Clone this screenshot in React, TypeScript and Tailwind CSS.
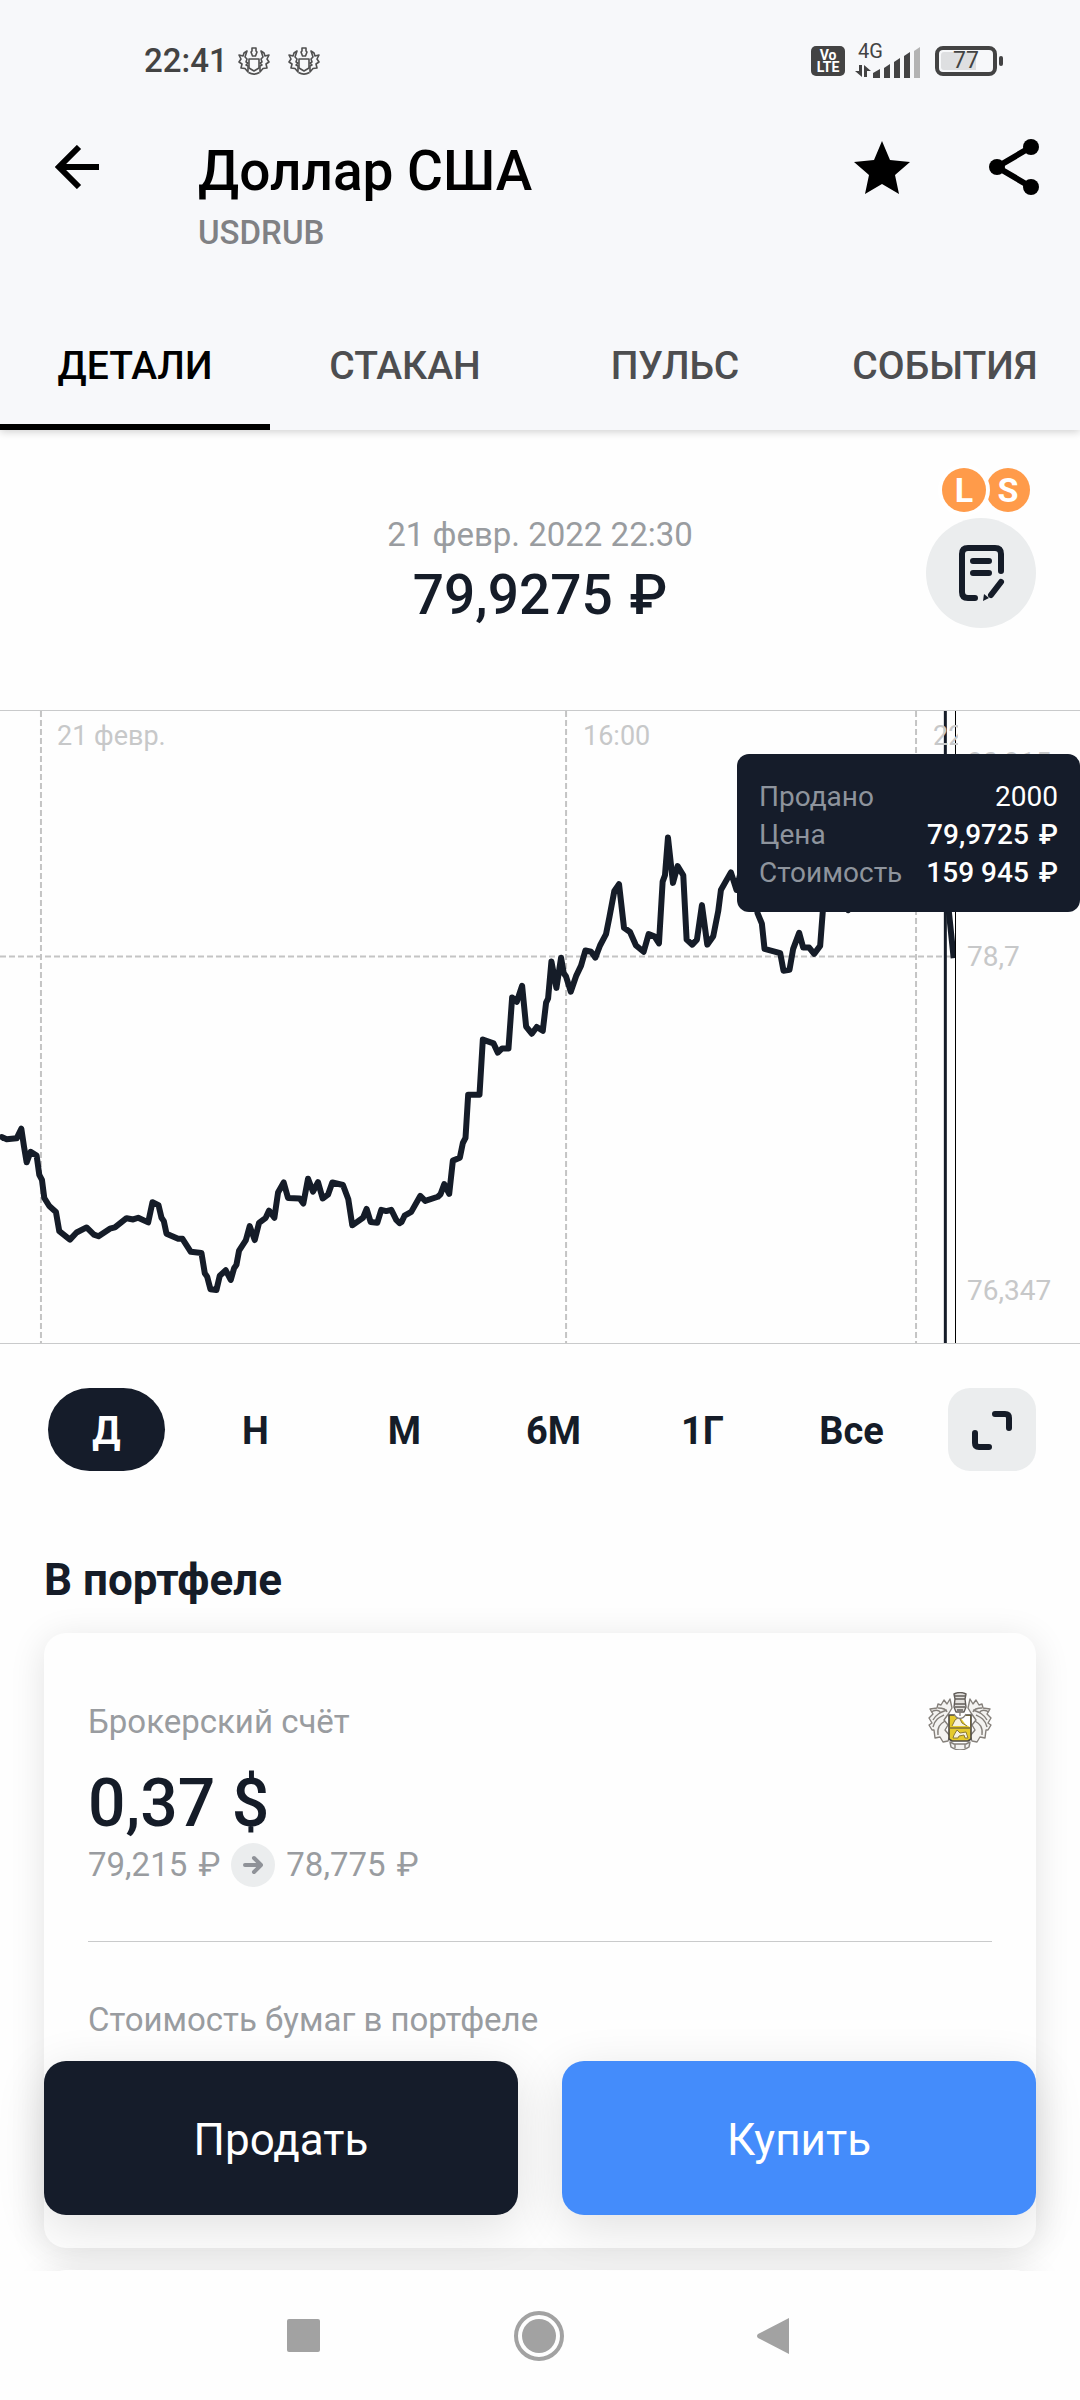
import type { ReactNode } from "react";

const TABS = ["ДЕТАЛИ", "СТАКАН", "ПУЛЬС", "СОБЫТИЯ"];
const RANGES = ["Д", "Н", "М", "6М", "1Г", "Все"];

// viewBox units of the plot: 3 per pixel across, stretched to the panel's height
const PRICE_LINE =
  "0,1043 5,1038 20,1043 50,1041 64,1018 72,1060 80,1098 92,1073 110,1082 118,1128 126,1140 133,1183 148,1202 168,1216 " +
  "178,1262 210,1282 230,1265 260,1253 282,1270 296,1274 330,1256 345,1253 380,1231 400,1234 415,1230 445,1241 458,1193 " +
  "476,1200 485,1230 492,1238 500,1268 535,1280 548,1280 573,1311 605,1314 615,1362 622,1370 632,1400 650,1402 660,1368 " +
  "678,1355 693,1378 703,1350 710,1342 718,1308 738,1284 750,1250 765,1283 778,1242 798,1230 808,1213 824,1230 835,1170 " +
  "852,1146 865,1183 900,1184 911,1196 925,1137 940,1168 955,1145 969,1184 985,1175 998,1146 1030,1152 1046,1186 " +
  "1058,1248 1090,1230 1101,1209 1113,1240 1133,1242 1145,1211 1160,1214 1175,1211 1190,1235 1200,1243 1206,1240 " +
  "1215,1225 1235,1216 1262,1178 1277,1190 1315,1180 1323,1174 1334,1150 1349,1173 1360,1094 1381,1087 1390,1052 " +
  "1398,1040 1406,937 1440,937 1450,806 1482,815 1495,837 1508,827 1527,827 1538,706 1552,716 1568,678 1580,775 " +
  "1597,792 1612,776 1630,785 1640,718 1646,708 1656,620 1671,683 1685,611 1693,648 1700,656 1714,692 1730,655 " +
  "1745,630 1758,594 1775,597 1788,611 1802,582 1820,555 1830,515 1845,452 1859,436 1874,540 1892,550 1910,582 " +
  "1933,597 1948,555 1965,560 1979,577 1990,430 1997,415 2006,325 2021,433 2035,393 2052,415 2062,568 2079,580 " +
  "2093,568 2108,486 2124,580 2142,560 2157,500 2165,450 2195,408 2212,450 2232,380 2262,420 2275,505 2288,530 " +
  "2296,590 2343,600 2353,642 2371,640 2382,590 2400,552 2412,587 2430,587 2445,602 2463,583 2472,490 2500,420 " +
  "2547,498 2600,430 2700,380 2800,400 2850,505 2864,612";

function TinkoffOutline() {
  return (
    <svg viewBox="0 0 32 28" className="h-7 w-8" fill="none" stroke="#505050" strokeWidth="1.6" strokeLinejoin="round" aria-hidden="true">
      <path d="M14 1h4v3l1 1-1.500 4h-3L13 5l1-1zM11 12h10v9l-5 3-5-3z" />
      <path d="M9 4 6 6 5 9 1 8l2 4-2 3 3 2-1 4 4 .5L10 25v-6l-2-1 2-2-2-1 1-3-2-2z" />
      <path d="M23 4l3 2 1 3 4-1-2 4 2 3-3 2 1 4-4 .5L22 25v-6l2-1-2-2 2-1-1-3 2-2z" />
      <path d="M10.500 25.500c3.500 2 7.500 2 11 0" />
    </svg>
  );
}

function BrokerCrest() {
  return (
    <svg viewBox="0 0 64 58" className="h-[58px] w-16" fill="none" stroke="#85807b" strokeWidth="1.4" strokeLinejoin="round" aria-hidden="true">
      <path d="M22 7 19 12 16 8 13 13 10 12 9 16 2 17 5 22 1 26 4 31 1 33 4 38 6 38 7 46 12 45 15 50 20 49 22 44 17 38 20 33 16 28 21 21 24 16z" fill="#f4f3f1" />
      <path d="M42 7l3 5 3-4 3 5 3-1 1 4 7 1-3 5 4 4-3 5 3 2-3 5-2 0-1 8-5-1-3 5-5-1-2-5 5-6-3-5 4-5-5-7-3-5z" fill="#f4f3f1" />
      <path d="M3 20c5-3 8-2 10 1M10 16c5 0 8 1 9 4M5 28c4-7 9-8 14-10M5 35c2-8 7-10 11-12M10 43c-1-8 2-11 7-14" />
      <path d="M61 20c-5-3-8-2-10 1M54 16c-5 0-8 1-9 4M59 28c-4-7-9-8-14-10M59 35c-2-8-7-10-11-12M54 43c1-8-2-11-7-14" />
      <path d="M26 2c4-2 8-2 12 0l-1 5 1 8-2 5h-8l-2-5 1-8z" fill="#e4e2df" stroke="#625d59" />
      <path d="M27 4h10M27 7h10M26 12h12M27 15h10M29 18h6" stroke="#625d59" />
      <path d="M21 23h22v24l-3 2H24l-3-2z" fill="#e5ca2c" stroke="#4c4844" strokeWidth="1.6" />
      <path d="M32 24h10v11l-4-2-6-8z" fill="#fff" stroke="none" />
      <path d="M21 36h22" stroke="#77683a" />
      <path d="M24 34l3-6 4-3 3 6 5 3M25 46l1-3 3-5 3 3 6-1 2 6h-3l-1-3-5 1-1 2z" fill="#f6f1de" stroke="#8b7934" strokeWidth="1" />
      <path d="M26 22c3 6 9 6 12 0M32 19v5" fill="#fff" />
      <path d="M22 50l4 2h12l4-2-1 5c-6 4-12 4-18 0zM27 52v4M37 52v4" fill="#f4f3f2" />
    </svg>
  );
}

function Ruble() {
  return <span className="ml-[3px]">₽</span>;
}

function StatusBar() {
  return (
    <div className="flex h-[121px] items-center justify-between pr-[77px] pl-36 text-[#434343]">
      <div className="flex items-center">
        <span className="text-[33px] font-medium">22:41</span>
        <span className="ml-[10px] flex gap-[18px]">
          <TinkoffOutline />
          <TinkoffOutline />
        </span>
      </div>
      <div className="flex items-center">
        <div className="flex h-[30px] w-[34px] flex-col items-center justify-center rounded-[5px] bg-[#434343] text-[14px] leading-3 font-bold text-white">
          <span>Vo</span>
          <span>LTE</span>
        </div>
        <div className="relative ml-[10px] h-[35px] w-[66px]">
          <span className="absolute top-0 left-[3px] text-[20px] leading-[16px]">4G</span>
          <svg viewBox="0 0 66 35" className="h-full w-full" fill="#434343" aria-hidden="true">
            <path d="M4 22h3v12L0 28h4zM9 22l7 6h-4v6H9z" />
            <path d="M18 30l7-4v9h-7zM29 25l6-4v14h-6zM39 19l6-4v20h-6zM49 13l6-4v26h-6z" />
            <path d="M59 8l6-4v31h-6z" fill="#b3b3b3" />
          </svg>
        </div>
        <div className="ml-[14px] flex items-center gap-[2px]">
          <div className="h-[30px] w-[62px] rounded-[8px] border-4 border-[#434343] p-[2px]">
            <div className="flex h-full w-full items-center justify-center rounded-[3px] bg-linear-to-r from-[#dedfe1] from-70% to-transparent to-70% text-[23px] leading-4">77</div>
          </div>
          <div className="h-[10px] w-[4px] rounded-[2px] bg-[#434343]" />
        </div>
      </div>
    </div>
  );
}

function Header() {
  return (
    <header className="relative z-10 shrink-0 bg-[#f7f8fa] shadow-[0_2px_8px_rgba(0,0,0,0.18)]">
      <StatusBar />
      <div className="flex h-[187px] items-start pr-[41px] pl-[55px]">
        <button aria-label="Назад" className="mt-6">
          <svg viewBox="0 0 44 44" className="size-11" fill="none" stroke="#000" strokeWidth="6" aria-hidden="true">
            <path d="M44 22H5M24 2 4 22l20 20" />
          </svg>
        </button>
        <div className="ml-[99px] flex-1 pt-[18px]">
          <h1 className="text-[55px] leading-[64px] font-medium text-black">Доллар США</h1>
          <p className="mt-2 text-[33px] leading-[44px] font-medium text-[#808184]">USDRUB</p>
        </div>
        <button aria-label="В избранном" className="mt-5">
          <svg viewBox="0 0 56 53" className="h-[53px] w-14" aria-hidden="true">
            <path d="M28 0l8 19 20 2-15 13 4 19-17-10-17 10 4-19L0 21l20-2z" />
          </svg>
        </button>
        <button aria-label="Поделиться" className="mt-[18px] ml-[79px]">
          <svg viewBox="0 0 50 56" className="h-14 w-[50px]" aria-hidden="true">
            <path d="M42 8 8 28l34 20" fill="none" stroke="#000" strokeWidth="6" />
            <circle cx="42" cy="8" r="8" />
            <circle cx="8" cy="28" r="8" />
            <circle cx="42" cy="48" r="8" />
          </svg>
        </button>
      </div>
      <nav className="grid grid-cols-4">
        {TABS.map((tab, i) => (
          <button
            key={tab}
            className={
              i === 0
                ? "h-[122px] border-b-6 border-black text-[39px] font-medium text-black"
                : "h-[122px] border-b-6 border-transparent text-[39px] font-medium text-[#4d4e50]"
            }
          >
            {tab}
          </button>
        ))}
      </nav>
    </header>
  );
}

function Quote() {
  return (
    <section className="grid h-[280px] grid-cols-[1fr_auto_1fr] px-11">
      <div />
      <div className="pt-[82px] text-center">
        <p className="text-[33px] leading-[46px] text-[#999ca0]">21 февр. 2022 22:30</p>
        <p className="mt-[5px] text-[55px] leading-[64px] font-medium text-[#151c28]">
          79,9275 <Ruble />
        </p>
      </div>
      <div className="flex flex-col items-end pt-[38px]">
        <div className="mr-[6px] flex text-[34px] font-bold text-white">
          <span className="z-10 flex size-11 items-center justify-center rounded-full bg-[#ff9b4a] ring-4 ring-white">L</span>
          <span className="flex size-11 items-center justify-center rounded-full bg-[#ff9b4a]">S</span>
        </div>
        <button aria-label="Заметки" className="mt-[6px] flex size-[110px] items-center justify-center rounded-full bg-[#ebedee]">
          <svg viewBox="0 0 48 58" className="h-[58px] w-12" fill="none" stroke="#151c28" strokeWidth="6" strokeLinecap="round" aria-hidden="true">
            <path d="M18 54h-7q-6 0-6-6V10q0-6 6-6h27q6 0 6 6v17M16 17h16M16 29h16M44 38 34 51" />
            <path d="M27 50l5 4-6 3z" fill="#151c28" stroke="none" />
          </svg>
        </button>
      </div>
    </section>
  );
}

function DealTooltip() {
  return (
    <dl className="absolute top-[43px] right-0 flex w-[343px] flex-col rounded-xl bg-[#151c2a] px-[22px] pt-6 pb-5 text-[28px] leading-[38px] text-white">
      <div className="flex justify-between">
        <dt className="text-[#8e949d]">Продано</dt>
        <dd>2000</dd>
      </div>
      <div className="flex justify-between">
        <dt className="text-[#8e949d]">Цена</dt>
        <dd className="font-medium">
          79,9725 <Ruble />
        </dd>
      </div>
      <div className="flex justify-between">
        <dt className="text-[#8e949d]">Стоимость</dt>
        <dd className="font-medium">
          159 945 <Ruble />
        </dd>
      </div>
    </dl>
  );
}

function PriceChart() {
  return (
    <section className="relative flex h-[634px] border-y border-[#c9cacb] text-[27px] leading-8 text-[#c7c8c9]">
      <div className="relative min-w-0 flex-1 border-r border-black">
        <svg viewBox="0 24 2868 1504" preserveAspectRatio="none" className="h-full w-full" fill="none" aria-hidden="true">
          <g stroke="#c4c4c4" strokeWidth="2" strokeDasharray="6 3">
            <path d="M123 24v1504M1700 24v1504M2751 24v1504M0 608h2868" vectorEffect="non-scaling-stroke" />
          </g>
          <polyline points={PRICE_LINE} stroke="#151c28" strokeWidth="6" strokeLinejoin="round" vectorEffect="non-scaling-stroke" />
          <path d="M2839 24v1504" stroke="#151c28" strokeWidth="3" vectorEffect="non-scaling-stroke" />
        </svg>
        <span className="absolute top-[9px] left-[57px]">21 февр.</span>
        <span className="absolute top-[9px] left-[583px]">16:00</span>
        <span className="absolute top-[9px] left-[933px] w-[25px] overflow-hidden">22</span>
      </div>
      <div className="relative w-[124px] text-[28px]">
        <span className="absolute top-9 left-[11px]">80,915</span>
        <span className="absolute top-[230px] left-[11px]">78,7</span>
        <span className="absolute top-[564px] left-[11px]">76,347</span>
      </div>
      <DealTooltip />
    </section>
  );
}

function RangePicker() {
  return (
    <section className="mt-11 flex h-[83px] items-center pr-11 pl-8 text-[38px] font-bold text-[#151c28]">
      <div className="grid h-full flex-1 grid-cols-6">
        {RANGES.map((range, i) => (
          <button
            key={range}
            className={i === 0 ? "mx-4 rounded-full bg-[#151c2a] pt-1 text-white" : "mx-4 pt-1"}
          >
            {range}
          </button>
        ))}
      </div>
      <button aria-label="На весь экран" className="ml-[22px] flex h-full w-22 items-center justify-center rounded-[22px] bg-[#ebedee]">
        <svg viewBox="0 0 40 40" className="size-10" fill="none" stroke="#151c28" strokeWidth="6" strokeLinecap="round" aria-hidden="true">
          <path d="M23 4h10q4 0 4 4v10M3 23v10q0 4 4 4h10" />
        </svg>
      </button>
    </section>
  );
}

function Card({ children }: { children?: ReactNode }) {
  return <div className="h-[615px] rounded-[22px] bg-[#fefefe] px-11 pt-[59px] shadow-[0_6px_36px_rgba(0,0,0,0.11)]">{children}</div>;
}

function Portfolio() {
  return (
    <section className="px-11 pt-[77px]">
      <h2 className="text-[44px] leading-[64px] font-bold text-[#151c28]">В портфеле</h2>
      <div className="mt-[21px] flex flex-col gap-[22px]">
        <Card>
          <div className="flex items-start justify-between">
            <p className="pt-[6px] text-[33px] leading-[48px] text-[#999ca0]">Брокерский счёт</p>
            <BrokerCrest />
          </div>
          <p className="mt-4 text-[66px] leading-[76px] font-medium text-[#151c28]">0,37 $</p>
          <div className="flex items-center text-[33px] leading-[46px] text-[#999ca0]">
            <span>
              79,215 <Ruble />
            </span>
            <span className="mx-[11px] flex size-11 items-center justify-center rounded-full bg-[#ebedee]">
              <svg viewBox="0 0 20 20" className="size-5" fill="none" stroke="#8f9298" strokeWidth="4" strokeLinecap="round" strokeLinejoin="round" aria-hidden="true">
                <path d="M2 10h15M11 3l7 7-7 7" />
              </svg>
            </span>
            <span>
              78,775 <Ruble />
            </span>
          </div>
          <hr className="mt-[53px] border-[#c9cacb]" />
          <p className="mt-[54px] text-[33px] leading-[48px] text-[#999ca0]">Стоимость бумаг в портфеле</p>
        </Card>
        <Card />
      </div>
    </section>
  );
}

function OrderButtons() {
  return (
    <div className="absolute inset-x-0 bottom-14 grid grid-cols-2 gap-11 px-11 text-[44px] text-white">
      <button className="h-[154px] rounded-[22px] bg-[#151c2a] pt-1 shadow-[0_12px_50px_rgba(0,0,0,0.12)]">Продать</button>
      <button className="h-[154px] rounded-[22px] bg-[#448cfb] pt-1 shadow-[0_12px_50px_rgba(0,0,0,0.12)]">Купить</button>
    </div>
  );
}

function SystemNav() {
  return (
    <nav className="z-10 flex h-[129px] shrink-0 items-center justify-between bg-[#fefefe] pr-[290px] pl-[287px]">
      <button aria-label="Недавние">
        <span className="block size-[33px] rounded-[2px] bg-[#a2a2a2]" />
      </button>
      <button aria-label="Домой" className="flex size-[50px] items-center justify-center rounded-full border-4 border-[#a2a2a2]">
        <span className="size-[34px] rounded-full bg-[#a2a2a2]" />
      </button>
      <button aria-label="Назад">
        <svg viewBox="0 0 33 38" className="h-[38px] w-[33px]" fill="#a2a2a2" aria-hidden="true">
          <path d="M32 1v36L1 21q-2-2 0-4z" />
        </svg>
      </button>
    </nav>
  );
}

export default function App() {
  return (
    <div className="flex h-screen flex-col bg-[#fefefe] font-[Roboto,'Noto_Sans',sans-serif]">
      <Header />
      <div className="relative min-h-0 flex-1">
        <main className="h-full overflow-y-auto [scrollbar-width:none]">
          <Quote />
          <PriceChart />
          <RangePicker />
          <Portfolio />
        </main>
        <OrderButtons />
      </div>
      <SystemNav />
    </div>
  );
}
